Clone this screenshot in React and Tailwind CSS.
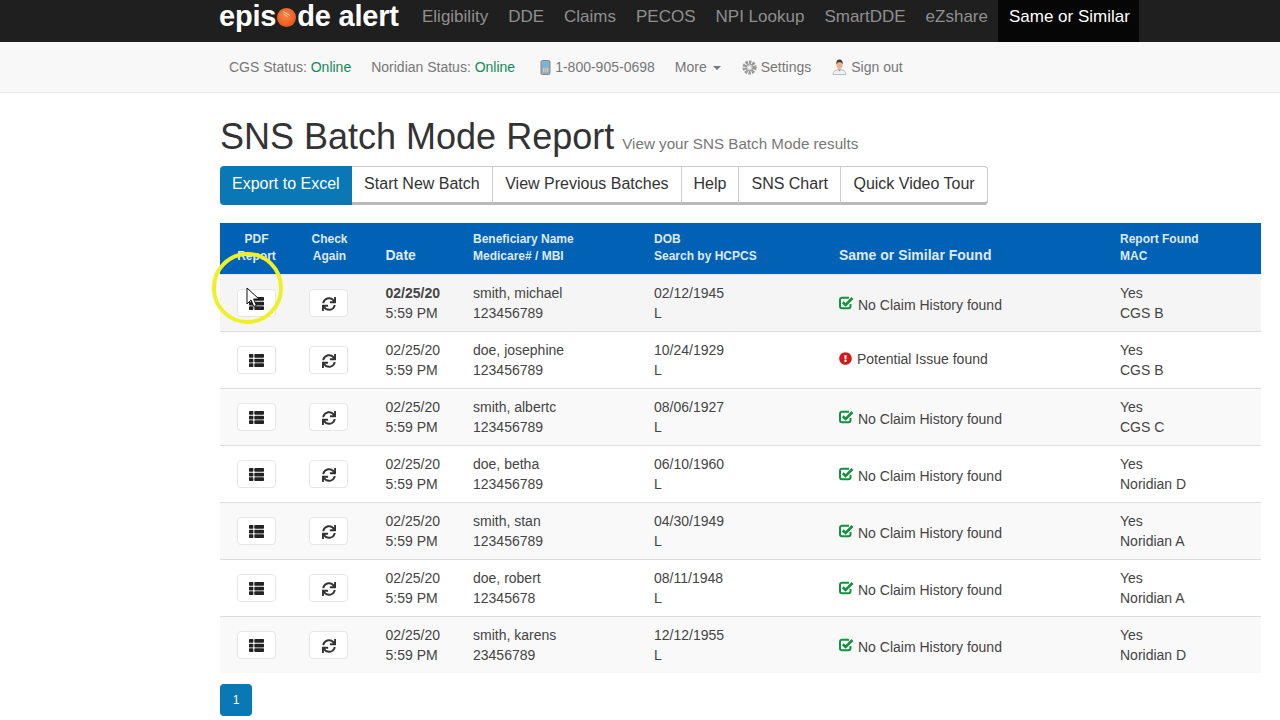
import React from "react";
import { FaThList, FaSync, FaExclamationCircle } from "react-icons/fa";

const navItems = ["Eligibility", "DDE", "Claims", "PECOS", "NPI Lookup", "SmartDDE", "eZshare"];
const tabs = [
  ["Export to Excel", "rounded-l-[4px] bg-[#0a78b4] px-[12px] pb-[4px] text-white"],
  ["Start New Batch", "px-[12.500px]"],
  ["View Previous Batches", "px-[12px]"],
  ["Help", "px-[12px]"],
  ["SNS Chart", "px-[12px]"],
  ["Quick Video Tour", "rounded-r-[4px] px-[12.500px]"],
];
const rows = [
  ["smith, michael", "123456789", "02/12/1945", true, "CGS B"],
  ["doe, josephine", "123456789", "10/24/1929", false, "CGS B"],
  ["smith, albertc", "123456789", "08/06/1927", true, "CGS C"],
  ["doe, betha", "123456789", "06/10/1960", true, "Noridian D"],
  ["smith, stan", "123456789", "04/30/1949", true, "Noridian A"],
  ["doe, robert", "12345678", "08/11/1948", true, "Noridian A"],
  ["smith, karens", "23456789", "12/12/1955", true, "Noridian D"],
];

function LogoDot() {
  return (
    <svg width="19" height="19" viewBox="0 0 19 19" className="mx-[1px] mt-[8px] shrink-0">
      <defs>
        <radialGradient id="dot" cx="45%" cy="40%" r="60%">
          <stop offset="0%" stopColor="#f58a4a" />
          <stop offset="100%" stopColor="#ea5518" />
        </radialGradient>
      </defs>
      <circle cx="9.500" cy="9.500" r="9.500" fill="url(#dot)" />
      <path d="M6 3.500l7 4M6.500 6l4 2.500" stroke="#f9c9a6" strokeWidth="1" fill="none" />
    </svg>
  );
}
function Phone() {
  return (
    <svg width="11" height="15" viewBox="0 0 11 15" className="shrink-0">
      <rect x="1" y="0.5" width="9" height="14" rx="1.500" fill="#a4abb1" stroke="#7c858c" />
      <rect x="2.500" y="2" width="6" height="5" fill="#6fb4e6" />
      <path d="M3 9h1.200M5 9h1.200M7 9h1.200M3 11h1.200M5 11h1.200M7 11h1.200" stroke="#e4e7e9" strokeWidth="1.200" />
    </svg>
  );
}
function Gear() {
  return (
    <svg width="15" height="15" viewBox="0 0 15 15" className="shrink-0">
      <circle cx="7.500" cy="7.500" r="5.300" fill="none" stroke="#9a9a9a" strokeWidth="3.600" strokeDasharray="2.400 1" />
      <circle cx="7.500" cy="7.500" r="3.400" fill="#d2d2d2" stroke="#8e8e8e" strokeWidth="0.800" />
      <circle cx="7.500" cy="7.500" r="1.500" fill="#f2f2f2" />
    </svg>
  );
}
function Person() {
  return (
    <svg width="15" height="16" viewBox="0 0 15 16" className="shrink-0">
      <path d="M1 15.500c0-3.600 3-4.800 6.500-4.800s6.500 1.200 6.500 4.800z" fill="#eef0f2" stroke="#a9afb5" strokeWidth="0.800" />
      <path d="M6 10.500l1.500 2 1.500-2z" fill="#d9824e" />
      <ellipse cx="7.500" cy="6" rx="3" ry="4" fill="#eab58c" />
      <path d="M4.300 5.500C4 1.800 5.800.6 7.500.6s3.500 1.200 3.200 4.900C10 3.800 9 3.300 7.500 3.300S5 3.800 4.300 5.500z" fill="#4a3a30" />
    </svg>
  );
}
function CheckSquare() {
  return (
    <svg width="15" height="14" viewBox="0 0 15 14" className="shrink-0">
      <path d="M11.500 8v2.300a2 2 0 0 1-2 2H3a2 2 0 0 1-2-2V3.700a2 2 0 0 1 2-2h7" fill="none" stroke="#12913f" strokeWidth="2" />
      <path d="M3.800 6.200l2.800 2.700L13.500 2" fill="none" stroke="#12913f" strokeWidth="2.600" />
    </svg>
  );
}

function Row({ r, i }) {
  const bg = i === 0 ? "bg-[#f5f5f5]" : i % 2 === 0 ? "bg-[#f9f9f9]" : "bg-white";
  const border = i === 6 ? "" : "border-b border-[#dddddd]";
  return (
    <tr className={`h-[57px] ${bg} ${border} text-[14px] leading-[20px] text-[#444444]`}>
      <td className="align-middle">
        <div className="ml-[17px] flex h-[28px] w-[39px] items-center justify-center rounded-[4px] border border-[#e6e6e6] bg-white pt-[2px]">
          <FaThList className="text-[15px] text-[#222222]" />
        </div>
      </td>
      <td className="align-middle">
        <div className="ml-[16px] flex h-[28px] w-[39px] items-center justify-center rounded-[4px] border border-[#e6e6e6] bg-white pt-[2px]">
          <FaSync className="text-[14px] text-[#333333]" />
        </div>
      </td>
      <td className="pl-[19.500px] align-middle">
        <div className={i === 0 ? "font-bold" : ""}>02/25/20</div>
        <div>5:59 PM</div>
      </td>
      <td className="pl-[8px] align-middle">
        <div>{r[0]}</div>
        <div>{r[1]}</div>
      </td>
      <td className="pl-[8px] align-middle">
        <div>{r[2]}</div>
        <div>L</div>
      </td>
      <td className="pl-[8px] align-middle">
        {r[3] ? (
          <div className="flex items-center gap-[4px] pt-[4px]">
            <span className="-mt-[3px] flex">
              <CheckSquare />
            </span>
            <span>No Claim History found</span>
          </div>
        ) : (
          <div className="flex items-center gap-[5px] pb-[2px]">
            <FaExclamationCircle className="text-[13px] text-[#d01c1f]" />
            <span>Potential Issue found</span>
          </div>
        )}
      </td>
      <td className="pl-[8px] align-middle">
        <div>Yes</div>
        <div>{r[4]}</div>
      </td>
    </tr>
  );
}

export default function App() {
  return (
    <div className="relative h-[720px] w-[1280px] overflow-hidden bg-white font-['Liberation_Sans',Arial,sans-serif]">
      <div className="flex h-[42px] bg-[#1f1f1f] pl-[219px]">
        <div className="flex w-[193px] items-start text-[29px] font-bold leading-[32px] tracking-[-0.2px] text-white">
          <span>epis</span>
          <LogoDot />
          <span>de alert</span>
        </div>
        <div className="flex">
          {navItems.map((n) => (
            <div key={n} className="px-[10px] pt-[7px] text-[17px] leading-[19px] text-[#8f8f8f]">
              {n}
            </div>
          ))}
          <div className="bg-[#060606] pl-[11px] pr-[9px] pt-[7px] text-[17px] leading-[19px] text-white">Same or Similar</div>
        </div>
      </div>

      <div className="flex h-[51px] items-center border-b border-[#e7e7e7] bg-[#f8f8f8] pl-[229px] text-[14px] text-[#777777]">
        <span>
          CGS Status: <span className="text-[#16895a]">Online</span>
        </span>
        <span className="ml-[20px]">
          Noridian Status: <span className="text-[#16895a]">Online</span>
        </span>
        <span className="ml-[25px] flex items-center gap-[4px]">
          <Phone />
          1-800-905-0698
        </span>
        <span className="ml-[20px] flex items-center">
          More
          <span className="ml-[6px] mt-[2px] h-0 w-0 border-x-[4px] border-t-[4px] border-x-transparent border-t-[#777777]" />
        </span>
        <span className="ml-[21px] flex items-center gap-[4px]">
          <Gear />
          Settings
        </span>
        <span className="ml-[21px] flex items-center gap-[4px]">
          <Person />
          Sign out
        </span>
      </div>

      <div className="ml-[220px] w-[1041px]">
        <div className="mt-[23px] flex h-[42px] items-baseline leading-[42px] text-[#333333]">
          <h1 className="text-[36px] font-normal">SNS Batch Mode Report</h1>
          <span className="ml-[8px] text-[15.200px] text-[#777777]">View your SNS Batch Mode results</span>
        </div>

        <div className="mt-[8px] flex h-[39px] w-fit rounded-[4px] text-[16px] text-[#333333]">
          {tabs.map(([t, cls], i) => (
            <div
              key={t}
              className={
                i === 0
                  ? `flex items-center ${cls}`
                  : `flex items-center border border-b-[3px] border-l-0 border-[#cccccc] border-b-[#b9b9b9] bg-white pb-[1px] ${cls}`
              }
            >
              {t}
            </div>
          ))}
        </div>

        <table className="mt-[18px] w-[1041px] table-fixed border-collapse">
          <colgroup>
            <col className="w-[73px]" />
            <col className="w-[73px]" />
            <col className="w-[99px]" />
            <col className="w-[181px]" />
            <col className="w-[185px]" />
            <col className="w-[281px]" />
            <col className="w-[149px]" />
          </colgroup>
          <thead>
            <tr className="h-[51px] border-b border-[#e4e4e4] bg-[#0061b5] text-left align-bottom font-bold text-[#dfe9f4]">
              <th className="pb-[9px] text-center text-[12px] leading-[17px]">
                PDF
                <br />
                Report
              </th>
              <th className="pb-[9px] text-center text-[12px] leading-[17px]">
                Check
                <br />
                Again
              </th>
              <th className="pb-[10px] pl-[19.500px] text-[14px] leading-[17px]">Date</th>
              <th className="pb-[9px] pl-[8px] text-[12px] leading-[17px]">
                Beneficiary Name
                <br />
                Medicare# / MBI
              </th>
              <th className="pb-[9px] pl-[8px] text-[12px] leading-[17px]">
                DOB
                <br />
                Search by HCPCS
              </th>
              <th className="pb-[10px] pl-[8px] text-[14px] leading-[17px]">Same or Similar Found</th>
              <th className="pb-[9px] pl-[8px] text-[12px] leading-[17px]">
                Report Found
                <br />
                MAC
              </th>
            </tr>
          </thead>
          <tbody>
            {rows.map((r, i) => (
              <Row key={i} r={r} i={i} />
            ))}
          </tbody>
        </table>

        <div className="mt-[11px] flex h-[32px] w-[32px] items-center justify-center rounded-[4px] bg-[#0a78b4] text-[12px] text-white">
          1
        </div>
      </div>

      <div className="absolute left-[212px] top-[252px] h-[72px] w-[71px] rounded-full border-[4px] border-[#eef02a]" />
      <svg className="absolute left-[246px] top-[287px]" width="14" height="21" viewBox="0 0 14 21">
        <path d="M1 1v16l4-4 2.800 6.500 2.600-1.100L7.600 12H13z" fill="#ffffff" stroke="#111111" strokeWidth="1" />
      </svg>
    </div>
  );
}
